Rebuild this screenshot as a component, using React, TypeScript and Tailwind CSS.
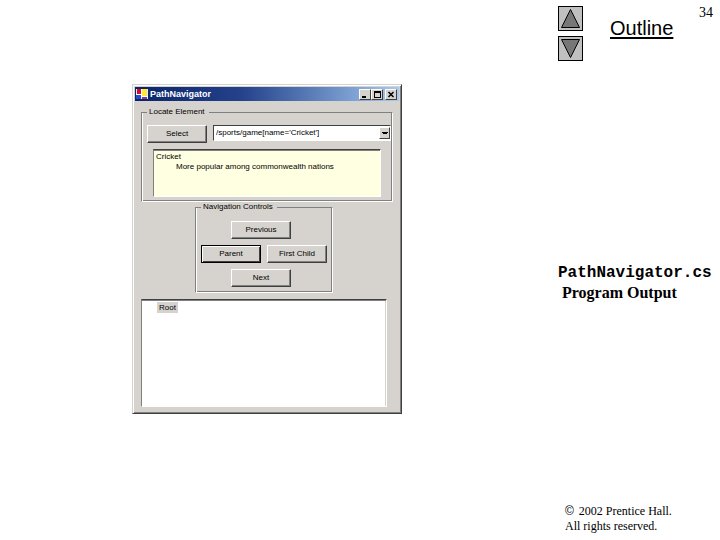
import type { ReactNode } from "react";

const bevel = "border border-t-white border-l-white border-r-[#404040] border-b-[#404040] bg-[#d6d3ce]";

const FormButton = ({ children, focused = false }: { children: ReactNode; focused?: boolean }) => (
  <button
    type="button"
    className={`h-[18px] w-[60px] shrink-0 text-center leading-[14px] ${
      focused
        ? "border border-black bg-[#d6d3ce] shadow-[inset_1px_1px_0_#fff,inset_-1px_-1px_0_#404040]"
        : `${bevel} shadow-[inset_-1px_-1px_0_#808080]`
    }`}
  >
    {children}
  </button>
);

const GroupBox = ({ title, className, children }: { title: string; className: string; children: ReactNode }) => (
  <fieldset
    className={`min-w-0 border border-[#808080] border-r-white border-b-white shadow-[inset_1px_0_0_#fff,inset_-1px_-1px_0_#808080] ${className}`}
  >
    <legend className="ml-[5px] h-[10px] bg-[#d6d3ce] pr-1 pl-[2px] leading-[10px]">{title}</legend>
    {children}
  </fieldset>
);

const TitleBar = () => (
  <header className="flex h-[14px] items-center bg-linear-to-r from-[#0a246a] via-[#24418a] via-40% to-[#a6caf0] pr-[2px] pl-px">
    <svg viewBox="0 0 12 12" className="size-3 shrink-0" aria-hidden="true">
      <path d="M0 1h12v10H0z" fill="#e8e8f0" />
      <path d="M1 1h5v5H1z" fill="#c8102e" />
      <path d="M6 1h5v7H6z" fill="#ffe838" />
      <path d="M0 7h5v4H0z" fill="#2848d8" />
      <path d="M6 9h5v2H6z" fill="#8b3a8b" />
      <path d="M5 1h1v10H5zM0 6h6v1H0zM6 8h6v1H6z" fill="#fff" />
    </svg>
    <h1 className="ml-[2px] flex-1 text-[9px] leading-[14px] font-bold text-white">PathNavigator</h1>
    <div className="flex">
      <button type="button" aria-label="Minimize" className={`h-[11px] w-3 ${bevel}`}>
        <svg viewBox="0 0 10 9" className="block h-[9px] w-[10px]" shapeRendering="crispEdges">
          <path d="M2 6h4v2H2z" />
        </svg>
      </button>
      <button type="button" aria-label="Maximize" className={`h-[11px] w-3 ${bevel}`}>
        <svg viewBox="0 0 10 9" className="block h-[9px] w-[10px]" shapeRendering="crispEdges">
          <path d="M2 1h7v7H2zM3 3v4h5V3z" fillRule="evenodd" />
        </svg>
      </button>
      <button type="button" aria-label="Close" className={`ml-[2px] h-[11px] w-3 ${bevel}`}>
        <svg viewBox="0 0 10 9" className="block h-[9px] w-[10px]">
          <path d="M2.5 2l5 5M7.5 2l-5 5" stroke="#000" strokeWidth="1.5" />
        </svg>
      </button>
    </div>
  </header>
);

const PathNavigator = () => (
  <section className="w-[270px] border border-[#d6d3ce] border-r-[#404040] border-b-[#404040] bg-[#d6d3ce] p-[2px] font-['Liberation_Sans',sans-serif] text-[8px] text-black shadow-[inset_1px_1px_0_#fff,inset_-1px_-1px_0_#808080]">
    <TitleBar />
    <div className="px-[6px] pt-[6px] pb-1">
      <GroupBox title="Locate Element" className="h-[95px] w-[252px]">
        <div className="mt-2 flex gap-[6px] pr-px pl-[5px]">
          <FormButton>Select</FormButton>
          <div className="relative h-[16px] flex-1">
            <select
              aria-label="XPath expression"
              className="block size-full appearance-none border border-white border-t-[#404040] border-l-[#404040] bg-white pl-[2px] text-[8px] leading-[14px]"
            >
              <option>/sports/game[name='Cricket']</option>
            </select>
            <span className={`pointer-events-none absolute top-[2px] right-px h-[12px] w-[11px] ${bevel}`}>
              <svg viewBox="0 0 9 10" className="block h-[10px] w-[9px]" shapeRendering="crispEdges">
                <path d="M2 4h6v1H7v1H3V5H2z" />
              </svg>
            </span>
          </div>
        </div>
        <div className="mt-[6px] ml-[11px] h-[48px] w-[228px] border border-white border-t-[#404040] border-l-[#808080] bg-[#ffffe1] pt-[2px] pl-[2px] leading-[10px] shadow-[inset_0_1px_0_#808080]">
          <p>Cricket</p>
          <p className="pl-5">More popular among commonwealth nations</p>
        </div>
      </GroupBox>
      <GroupBox title="Navigation Controls" className="ml-[54px] h-[91px] w-[138px]">
        <div className="flex flex-col gap-[6px] pt-[9px] pl-[5px]">
          <div className="flex pl-[30px]">
            <FormButton>Previous</FormButton>
          </div>
          <div className="flex gap-[6px]">
            <FormButton focused>Parent</FormButton>
            <FormButton>First Child</FormButton>
          </div>
          <div className="flex pl-[30px]">
            <FormButton>Next</FormButton>
          </div>
        </div>
      </GroupBox>
      <ul
        role="tree"
        className="mt-[6px] h-[108px] w-[246px] border border-white border-t-[#404040] border-l-[#808080] bg-white pt-[2px] pl-[15px] shadow-[inset_0_1px_0_#808080,inset_-1px_0_0_#d6d3ce]"
      >
        <li role="treeitem" className="w-fit bg-[#d6d3ce] px-[2px] leading-[11px]">
          Root
        </li>
      </ul>
    </div>
  </section>
);

const SlideArrow = ({ label, points }: { label: string; points: string }) => (
  <button type="button" aria-label={label} className="block size-[25px] border border-black bg-[#c0c0c0]">
    <svg viewBox="0 0 23 23" className="block size-[23px]">
      <polygon points={points} fill="#777" stroke="#000" />
    </svg>
  </button>
);

export default function App() {
  return (
    <main className="flex min-h-screen bg-white text-black">
      <div className="flex-1 pt-[84px] pl-[132px]">
        <PathNavigator />
      </div>
      <aside className="flex w-[162px] shrink-0 flex-col font-['Liberation_Serif',serif]">
        <nav className="flex pt-[6px]">
          <div className="flex flex-col gap-[5px]">
            <SlideArrow label="Previous slide" points="11.5,2.5 2.5,20.5 20.5,20.5" />
            <SlideArrow label="Next slide" points="11.5,20.5 2.5,2.5 20.5,2.5" />
          </div>
          <a
            href="#outline"
            className="mt-[10px] ml-[27px] h-6 font-['Liberation_Sans',sans-serif] text-[20px] leading-6 underline decoration-2 underline-offset-2"
          >
            Outline
          </a>
          <span className="mr-[7px] ml-auto text-[14px] leading-[14px]">34</span>
        </nav>
        <div className="mt-[202px] font-bold">
          <h2 className="font-['Liberation_Mono',monospace] text-[16px] leading-5">PathNavigator.cs</h2>
          <p className="pl-1 text-[16px] leading-5">Program Output</p>
        </div>
        <footer className="mt-auto pb-[6px] pl-[7px] text-[12px] leading-[15px]">
          <p>
            <span className="mr-[2px] font-['Liberation_Sans',sans-serif]">©</span> 2002 Prentice Hall.
          </p>
          <p>All rights reserved.</p>
        </footer>
      </aside>
    </main>
  );
}
